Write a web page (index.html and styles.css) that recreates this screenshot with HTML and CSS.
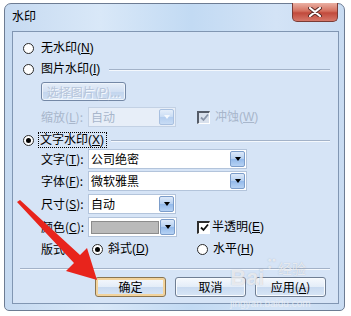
FILE: index.html
```html
<!DOCTYPE html>
<html>
<head>
<meta charset="utf-8">
<title>水印</title>
<link rel="stylesheet" href="styles.css">
</head>
<body>

<div class="window">
  <div class="titlebar">
    <span class="title">水印</span>
    <div class="close">
      <svg width="14" height="10" viewBox="0 0 14 10"><path d="M2 1 L12 9 M12 1 L2 9" stroke="#5a2a26" stroke-width="4" stroke-linecap="round"/><path d="M2 1 L12 9 M12 1 L2 9" stroke="#fff" stroke-width="2.2" stroke-linecap="round"/></svg>
    </div>
  </div>

  <div class="client">
    <div class="row opt r1"><span class="radio"></span><span>无水印(<u>N</u>)</span></div>
    <div class="row opt r2"><span class="radio"></span><span>图片水印(<u>I</u>)</span><span class="rule"></span></div>
    <div class="row sub r3"><span class="btn-off">选择图片(<u>P</u>)...</span></div>
    <div class="row sub r4">
      <span class="label off">缩放(<u>L</u>):</span>
      <span class="combo short off"><span class="field">自动</span><span class="drop"><i></i></span></span>
      <span class="check off"><svg width="9" height="9" viewBox="0 0 9 9"><path d="M1 4.5 L3.5 7 L8 1.5" fill="none" stroke="#8a96aa" stroke-width="1.8"/></svg></span>
      <span class="off">冲蚀(<u>W</u>)</span>
    </div>
    <div class="row opt r5"><span class="radio on"></span><span class="focus">文字水印(<u>X</u>)</span><span class="rule near"></span></div>
    <div class="row sub r6">
      <span class="label">文字(<u>T</u>):</span>
      <span class="combo wide"><span class="field">公司绝密</span><span class="drop"><i></i></span></span>
    </div>
    <div class="row sub r7">
      <span class="label">字体(<u>F</u>):</span>
      <span class="combo wide"><span class="field">微软雅黑</span><span class="drop"><i></i></span></span>
    </div>
    <div class="row sub r8">
      <span class="label">尺寸(<u>S</u>):</span>
      <span class="combo short"><span class="field">自动</span><span class="drop"><i></i></span></span>
    </div>
    <div class="row sub r9">
      <span class="label">颜色(<u>C</u>):</span>
      <span class="combo short color"><span class="swatch"></span><span class="drop"><i></i></span></span>
      <span class="check"><svg width="9" height="9" viewBox="0 0 9 9"><path d="M1 4.5 L3.5 7 L8 1.5" fill="none" stroke="#111" stroke-width="1.8"/></svg></span>
      <span>半透明(<u>E</u>)</span>
    </div>
    <div class="row sub r10">
      <span class="label wide-label">版式</span>
      <span class="choice first"><span class="radio on"></span><span>斜式(<u>D</u>)</span></span>
      <span class="choice"><span class="radio"></span><span>水平(<u>H</u>)</span></span>
    </div>
    <div class="sep"></div>
    <div class="actions">
      <span class="btn default">确定</span>
      <span class="btn">取消</span>
      <span class="btn">应用(<u>A</u>)</span>
    </div>
  </div>
</div>

<svg class="arrow" width="351" height="316" viewBox="0 0 351 316">
  <polygon points="17,202 20,200 80,255 87,248 97,280 66,271 74,263" fill="#e8241c"/>
</svg>

<div class="watermark">
  <div class="wm-line"><span class="wm-bai">Bai</span><span class="wm-paw">&#9679;&#9679;<br>&#9679;</span><span class="wm-jy">经验</span></div>
  <div class="wm-url">jingyan.baidu.com</div>
</div>

</body>
</html>
```

FILE: styles.css
```css
* {
  box-sizing: border-box;
}

body {
  margin: 0;
  width: 351px;
  height: 316px;
  position: relative;
  overflow: hidden;
  background-color: #ffffff;
  color: #000000;
  font-family: "Liberation Sans", "Noto Sans CJK SC", sans-serif;
  font-size: 12px;
  line-height: 16px;
}

u {
  text-decoration: underline;
}

.window {
  margin: 3px 6px 0 4px;
  height: 308px;
  border: 1px solid #6d7c93;
  border-radius: 7px 7px 5px 5px;
  background: linear-gradient(90deg, #c6daf1 0%, #d9e8f8 28%, #c2daf3 55%, #d3e3f6 80%, #c9dcf2 100%);
  padding: 0 5px 6px 7px;
  display: flex;
  flex-direction: column;
}

.titlebar {
  height: 27px;
  display: flex;
  justify-content: space-between;
  align-items: flex-start;
}

.title {
  margin-top: 4px;
  font-family: "Noto Sans CJK SC", sans-serif;
}

.close {
  width: 46px;
  height: 19px;
  margin-top: -1px;
  margin-right: 1px;
  border: 1px solid #7a3b35;
  border-top: none;
  border-radius: 0 0 5px 5px;
  background: linear-gradient(#eab0a3, #d4705f 45%, #c14a3c 55%, #d6786a);
  display: flex;
  align-items: center;
  justify-content: center;
}

.client {
  flex: 1;
  border: 1px solid #8196b2;
  background-color: #d6e4f6;
  display: flex;
  flex-direction: column;
  padding-top: 6px;
}

.row {
  display: flex;
  align-items: center;
  height: 20px;
  white-space: nowrap;
}

.opt {
  padding-left: 10px;
}

.sub {
  padding-left: 28px;
}

.r2 { margin-top: 1px; }
.r3 { margin-top: 3px; height: 19px; }
.r4 { margin-top: 6px; }
.r5 { margin-top: 5px; height: 16px; }
.r6 { margin-top: 1px; }
.r7 { margin-top: 2px; }
.r8 { margin-top: 3px; }
.r9 { margin-top: 3px; }
.r10 { margin-top: 2px; }

.radio {
  width: 11px;
  height: 11px;
  border: 1px solid #2a2a2a;
  border-radius: 50%;
  background-color: #ffffff;
  margin-right: 7px;
  flex: none;
  display: flex;
  align-items: center;
  justify-content: center;
}

.radio.on::after {
  content: "";
  width: 5px;
  height: 5px;
  border-radius: 50%;
  background-color: #000000;
}

.rule {
  flex: 1;
  height: 2px;
  margin: 1px 8px 0 9px;
  border-top: 1px solid #a3b2c8;
  border-bottom: 1px solid #f4f8fd;
}

.rule.near {
  margin-left: 5px;
}

.focus {
  outline: 1px dotted #000000;
  padding: 0 2px 0 1px;
  margin-left: -2px;
  line-height: 14px;
}

.btn-off {
  width: 85px;
  height: 19px;
  border: 1px solid #7488a6;
  border-radius: 3px;
  background: linear-gradient(#e6eef9, #d2e0f3 50%, #c2d5ee 51%, #cfdff3);
  box-shadow: inset 0 0 0 1px #eef4fb;
  color: #b7c5da;
  text-shadow: 1px 1px 0 #f5f8fc;
  display: flex;
  align-items: center;
  justify-content: center;
  font-family: "Noto Sans CJK SC", sans-serif;
}

.label {
  width: 47px;
  flex: none;
  font-family: "Noto Sans CJK SC", "Liberation Sans", sans-serif;
}

.label.wide-label {
  width: 51px;
}

.off {
  color: #a8b6cb;
}

.combo {
  height: 20px;
  border: 1px solid #b3c4db;
  background-color: #ffffff;
  padding: 1px;
  display: flex;
  align-items: center;
  flex: none;
}

.combo.wide {
  width: 159px;
}

.combo.short {
  width: 88px;
  margin-right: 21px;
}

.combo.color {
  width: 89px;
  margin-right: 20px;
}

.combo.off {
  background-color: #e7eef8;
  border-color: #c3d1e4;
}

.field {
  flex: 1;
  padding-left: 1px;
  font-family: "Noto Sans CJK SC", sans-serif;
}

.swatch {
  width: 68px;
  height: 13px;
  margin-left: 1px;
  border: 1px solid #8c8c8c;
  background-color: #bababa;
}

.drop {
  width: 15px;
  height: 16px;
  margin-left: auto;
  border: 1px solid #7c9dca;
  border-radius: 2px;
  background: linear-gradient(#dde9f9, #b4cff1 50%, #93b9ea 51%, #b6d2f4);
  display: flex;
  align-items: center;
  justify-content: center;
}

.drop i {
  width: 0;
  height: 0;
  border-left: 3.5px solid transparent;
  border-right: 3.5px solid transparent;
  border-top: 4px solid #000000;
}

.combo.off .drop {
  border-color: #a9c0e0;
  background: linear-gradient(#e4eefa, #c9dcf4 50%, #b3cdef 51%, #c8dcf5);
}

.combo.off .drop i {
  border-top-color: #f4f8fd;
}

.check {
  width: 13px;
  height: 13px;
  flex: none;
  border-top: 2px solid #2e2e2e;
  border-left: 2px solid #2e2e2e;
  border-right: 1px solid #ffffff;
  border-bottom: 1px solid #ffffff;
  background-color: #ffffff;
  display: flex;
  align-items: center;
  justify-content: center;
  margin-right: 2px;
}

.check.off {
  background-color: #d9e1ed;
  border-top-color: #555c68;
  border-left-color: #555c68;
  margin-right: 5px;
}

.choice {
  display: flex;
  align-items: center;
}

.choice .radio {
  margin-right: 5px;
}

.choice.first {
  width: 105px;
}

.sep {
  margin: 9px 8px 0 7px;
  height: 2px;
  border-top: 1px solid #a3b2c8;
  border-bottom: 1px solid #f4f8fd;
}

.actions {
  margin-top: 7px;
  display: flex;
  justify-content: flex-end;
  gap: 9px;
  padding-right: 12px;
}

.btn {
  width: 71px;
  height: 20px;
  border: 1px solid #6f7e93;
  border-radius: 3px;
  background: linear-gradient(#f6f9fd, #e4edf8 48%, #c9daf0 52%, #d8e6f6);
  box-shadow: inset 0 0 0 1px #f8fbfe;
  display: flex;
  align-items: center;
  justify-content: center;
  font-family: "Noto Sans CJK SC", sans-serif;
}

.btn.default {
  border-color: #8a7550;
  box-shadow: inset 0 0 0 2px #f3d39b;
}

.arrow {
  position: absolute;
  left: 0;
  top: 0;
  pointer-events: none;
}

.watermark {
  position: absolute;
  left: 230px;
  top: 252px;
  width: 104px;
  color: rgba(255, 255, 255, 0.7);
  pointer-events: none;
}

.wm-line {
  display: flex;
  align-items: flex-start;
  height: 38px;
}

.wm-bai {
  font-family: "Liberation Sans", sans-serif;
  font-weight: bold;
  font-size: 22px;
  line-height: 24px;
  margin-top: 14px;
  text-shadow: 0 0 1px rgba(120, 130, 150, 0.5);
}

.wm-paw {
  font-size: 7px;
  line-height: 7px;
  margin: 4px 2px 0 3px;
  text-shadow: 0 0 1px rgba(120, 130, 150, 0.5);
}

.wm-jy {
  font-family: "Noto Sans CJK SC", sans-serif;
  font-size: 14px;
  line-height: 16px;
  margin-top: 8px;
  text-shadow: 0 0 1px rgba(120, 130, 150, 0.5);
}

.wm-url {
  font-family: "Liberation Sans", sans-serif;
  font-size: 10px;
  line-height: 12px;
  margin-top: 8px;
  color: rgba(235, 238, 243, 0.8);
}
```
